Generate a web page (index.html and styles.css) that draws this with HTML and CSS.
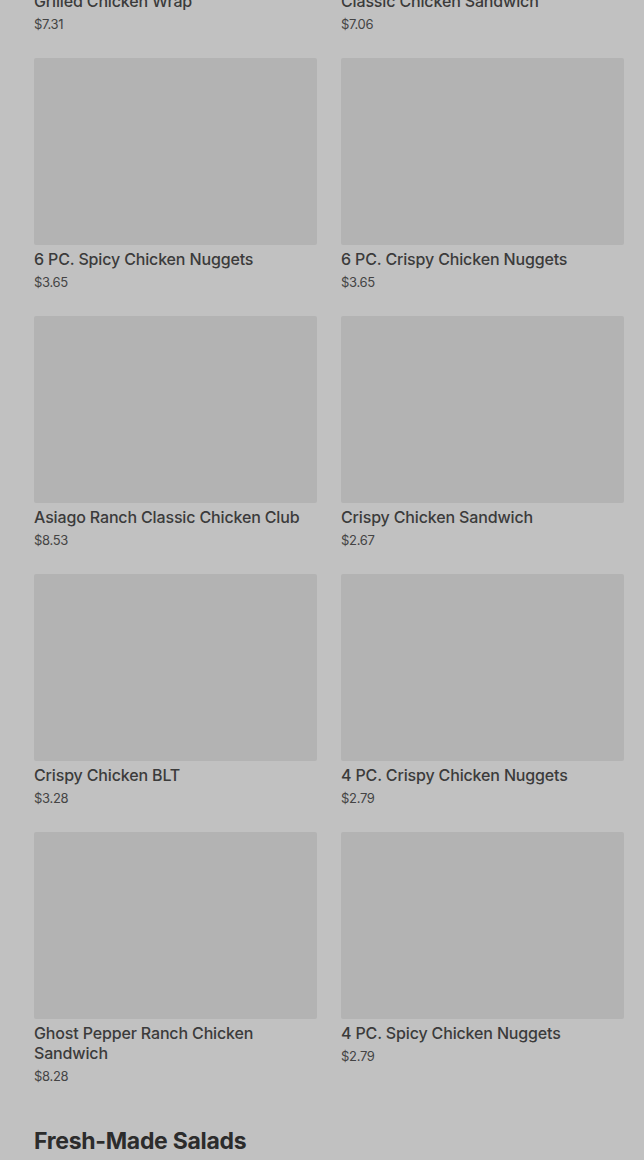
FILE: index.html
```html
<!DOCTYPE html>
<html>
<head>
<title>Menu</title>
<link rel="stylesheet" href="styles.css">
</head>
<body>

<div class="menu">
    <!-- Chicken section (scrolled part) -->
    <div class="grid">
        <div class="item">
            <div class="thumb"></div>
            <div class="name">Grilled Chicken Wrap</div>
            <div class="price">$7.31</div>
        </div>
        <div class="item">
            <div class="thumb"></div>
            <div class="name">Classic Chicken Sandwich</div>
            <div class="price">$7.06</div>
        </div>
        <div class="item">
            <div class="thumb"></div>
            <div class="name">6 PC. Spicy Chicken Nuggets</div>
            <div class="price">$3.65</div>
        </div>
        <div class="item">
            <div class="thumb"></div>
            <div class="name">6 PC. Crispy Chicken Nuggets</div>
            <div class="price">$3.65</div>
        </div>
        <div class="item">
            <div class="thumb"></div>
            <div class="name">Asiago Ranch Classic Chicken Club</div>
            <div class="price">$8.53</div>
        </div>
        <div class="item">
            <div class="thumb"></div>
            <div class="name">Crispy Chicken Sandwich</div>
            <div class="price">$2.67</div>
        </div>
        <div class="item">
            <div class="thumb"></div>
            <div class="name">Crispy Chicken BLT</div>
            <div class="price">$3.28</div>
        </div>
        <div class="item">
            <div class="thumb"></div>
            <div class="name">4 PC. Crispy Chicken Nuggets</div>
            <div class="price">$2.79</div>
        </div>
        <div class="item">
            <div class="thumb"></div>
            <div class="name">Ghost Pepper Ranch Chicken Sandwich</div>
            <div class="price">$8.28</div>
        </div>
        <div class="item">
            <div class="thumb"></div>
            <div class="name">4 PC. Spicy Chicken Nuggets</div>
            <div class="price">$2.79</div>
        </div>
    </div>

    <h2 class="section-title">Fresh-Made Salads</h2>
</div>

</body>
</html>
```

FILE: styles.css
```css
body {
    margin: 0;
    background-color: #c1c1c1;
    font-family: Inter, "Noto Sans", sans-serif;
    color: #3a3a3a;
    overflow: hidden;
}

.menu {
    margin-top: -200px; /* page is scrolled down */
    padding: 0 20px 0 34px;
}

.grid {
    display: grid;
    grid-template-columns: 283px 283px;
    column-gap: 24px;
    row-gap: 25px;
}

.item {
    display: flex;
    flex-direction: column;
}

.thumb {
    height: 187px;
    background-color: #b3b3b3;
    border-radius: 2px;
}

.name {
    margin-top: 4px;
    font-size: 16px;
    line-height: 20px;
    font-weight: 500;
    letter-spacing: -0.15px;
    color: #3b3b3b;
}

.price {
    margin-top: 4px;
    font-size: 13px;
    line-height: 18px;
    letter-spacing: -0.3px;
    color: #444;
}

.section-title {
    margin: 42px 0 0 0;
    font-size: 23px;
    line-height: 28px;
    font-weight: 700;
    letter-spacing: -0.3px;
    color: #2c2c2c;
}
```
